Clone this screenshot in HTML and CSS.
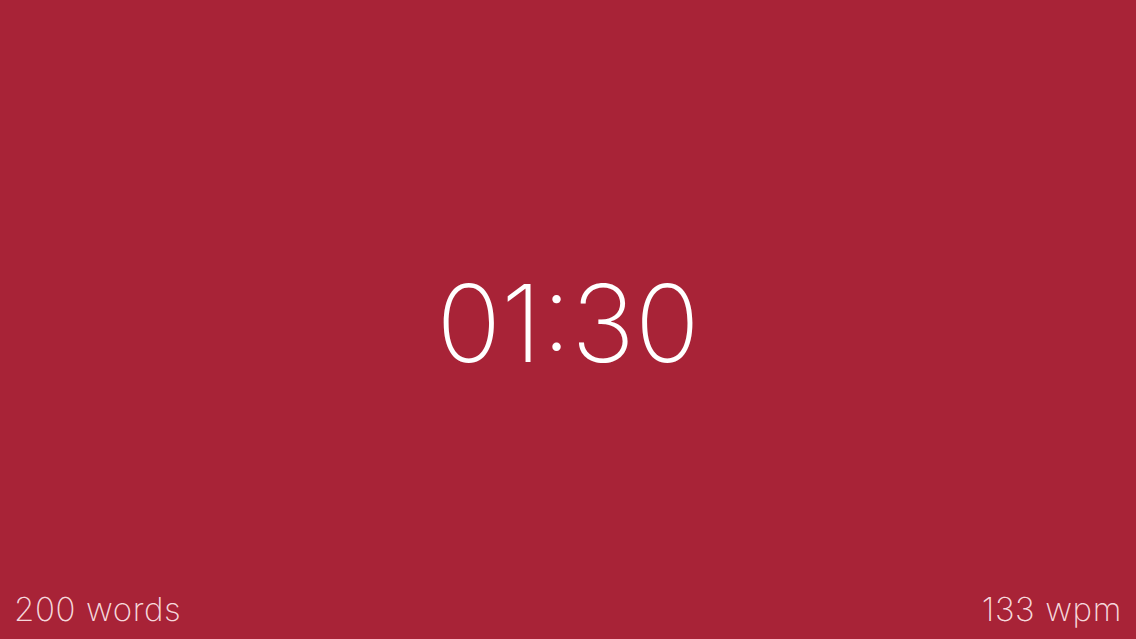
FILE: index.html
```html
<!DOCTYPE html>
<html>
<head>
<meta charset="utf-8">
<link rel="stylesheet" href="styles.css">
</head>
<body>
<div class="screen">
  <div class="timer">01:30</div>
  <div class="footer">
    <span class="stat">200 words</span>
    <span class="stat">133 wpm</span>
  </div>
</div>
</body>
</html>
```
FILE: styles.css
```css
html, body {
  margin: 0;
  padding: 0;
  height: 100%;
}
body {
  background: #a82337;
  font-family: Inter, Roboto, "Liberation Sans", sans-serif;
  color: #ffffff;
}
.screen {
  height: 639px;
  display: flex;
  flex-direction: column;
  box-sizing: border-box;
  padding: 0 14px;
}
.timer {
  flex: 1;
  display: flex;
  align-items: center;
  justify-content: center;
  font-size: 107px;
  font-weight: 200;
  padding-top: 62px;
}
.footer {
  display: flex;
  justify-content: space-between;
  align-items: flex-end;
  height: 56px;
}
.stat {
  font-size: 33px;
  font-weight: 200;
  letter-spacing: 0.6px;
  color: rgba(255, 235, 238, 0.92);
  line-height: 40px;
  padding-bottom: 10px;
}
```
